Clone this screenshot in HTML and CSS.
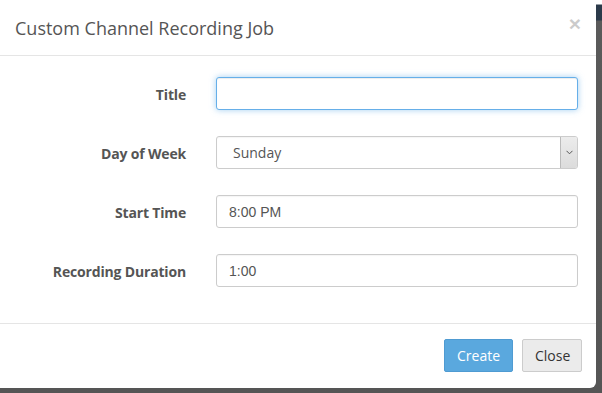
FILE: index.html
```html
<!DOCTYPE html>
<html>
<head>
<meta charset="utf-8">
<link rel="stylesheet" href="styles.css">
</head>
<body>
<div class="backdrop">
  <div class="modal">
    <div class="modal-header">
      <h4 class="modal-title">Custom Channel Recording Job</h4>
      <span class="close">×</span>
    </div>
    <div class="modal-body">
      <div class="row">
        <label class="label">Title</label>
        <div class="control focus"></div>
      </div>
      <div class="row">
        <label class="label">Day of Week</label>
        <div class="control select">
          <span class="select-text">Sunday</span>
          <span class="select-btn">
            <svg width="7" height="5" viewBox="0 0 7 5"><path d="M0.5 0.8 L3.5 3.8 L6.5 0.8" fill="none" stroke="#555" stroke-width="1"/></svg>
          </span>
        </div>
      </div>
      <div class="row">
        <label class="label">Start Time</label>
        <div class="control text">8:00 PM</div>
      </div>
      <div class="row">
        <label class="label">Recording Duration</label>
        <div class="control text">1:00</div>
      </div>
    </div>
    <div class="modal-footer">
      <button class="btn btn-primary">Create</button>
      <button class="btn btn-default">Close</button>
    </div>
  </div>
</div>
</body>
</html>
```
FILE: styles.css
```css
html, body {
  margin: 0;
  padding: 0;
}
body {
  background: #4e4e4e;
  width: 602px;
  height: 393px;
  overflow: hidden;
}
.backdrop {
  background: linear-gradient(to bottom, #fff 0, #fff 4px, #2b3a4a 5px, #2b3a4a 20px, #5a5a5a 21px, #555 100%);
  height: 393px;
}
.modal {
  width: 596px;
  height: 388px;
  background: #fff;
  border-radius: 0 0 6px 0;
  box-sizing: border-box;
  display: flex;
  flex-direction: column;
  font-family: "Open Sans", sans-serif;
  color: #555;
}
.modal-header {
  height: 56px;
  box-sizing: border-box;
  border-bottom: 1px solid #e5e5e5;
  padding: 0 15px;
  display: flex;
  align-items: center;
  justify-content: space-between;
}
.modal-title {
  margin: 0;
  font-size: 18px;
  font-weight: normal;
  color: #555;
  line-height: 24px;
  padding-top: 1px;
}
.close {
  font-size: 21px;
  font-weight: bold;
  color: #000;
  opacity: 0.2;
  line-height: 1;
  margin-right: 0;
  margin-top: -8px;
  font-family: "Liberation Sans", sans-serif;
}
.modal-body {
  flex: 1;
  padding-top: 21px;
  display: flex;
  flex-direction: column;
  gap: 26px;
}
.row {
  display: grid;
  grid-template-columns: 201px 362px;
  column-gap: 15px;
  align-items: center;
}
.label {
  text-align: right;
  padding-right: 15px;
  padding-top: 2px;
  font-weight: bold;
  font-size: 14px;
  letter-spacing: -0.17px;
  color: #555;
}
.control {
  height: 33px;
  box-sizing: border-box;
  border: 1px solid #ccc;
  border-radius: 3px;
  box-shadow: inset 0 1px 1px rgba(0,0,0,0.04);
  background: #fff;
}
.control.focus {
  border-color: #66afe9;
  box-shadow: inset 0 1px 1px rgba(0,0,0,0.075), 0 0 6px rgba(102,175,233,0.6);
}
.control.text {
  display: flex;
  align-items: center;
  padding-left: 12px;
  font-family: "Liberation Sans", Arial, sans-serif;
  font-size: 14px;
  color: #555;
}
.select {
  display: flex;
  align-items: center;
  justify-content: space-between;
  padding: 0 0 0 16px;
  font-size: 14px;
  color: #555;
}
.select-text {
  padding-bottom: 1px;
}
.select-btn {
  width: 17px;
  height: 31px;
  box-sizing: border-box;
  border-left: 1px solid #bbb;
  background: linear-gradient(to bottom, #ececec, #dcdcdc);
  border-radius: 0 2px 2px 0;
  display: flex;
  align-items: center;
  justify-content: center;
}
.modal-footer {
  border-top: 1px solid #e5e5e5;
  height: 65px;
  box-sizing: border-box;
  padding: 15px 14px 0 0;
  display: flex;
  justify-content: flex-end;
  align-items: flex-start;
  gap: 9px;
}
.btn {
  height: 33px;
  box-sizing: border-box;
  font-family: "Open Sans", sans-serif;
  font-size: 14px;
  border-radius: 2px;
  padding: 0 12px;
  cursor: pointer;
}
.btn-primary {
  width: 69px;
  background: #5aa8de;
  border: 1px solid #4f9bd2;
  color: #fff;
}
.btn-default {
  width: 60px;
  background: #ebebeb;
  border: 1px solid #ccc;
  color: #333;
}
```
